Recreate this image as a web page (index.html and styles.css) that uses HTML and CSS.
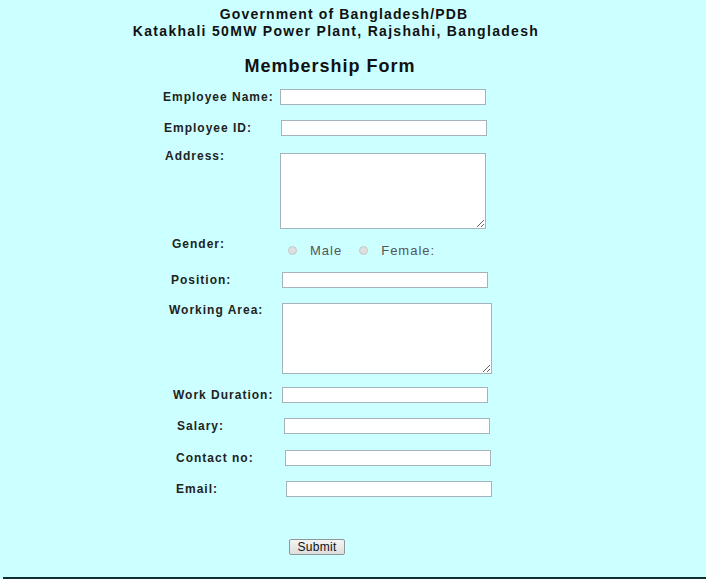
FILE: index.html
```html
<!DOCTYPE html>
<html>
<head>
<meta charset="utf-8">
<title>Membership Form</title>
<link rel="stylesheet" href="styles.css">
</head>
<body>
<div class="page">
  <header class="head">
    <div class="org org1">Government of Bangladesh/PDB</div>
    <div class="org">Katakhali 50MW Power Plant, Rajshahi, Bangladesh</div>
    <h1 class="title">Membership Form</h1>
  </header>
  <form class="form">
    <div class="row r-name"><label class="lbl">Employee Name:</label><input class="field" type="text"></div>
    <div class="row r-id"><label class="lbl">Employee ID:</label><input class="field" type="text"></div>
    <div class="row top r-addr"><label class="lbl">Address:</label><textarea class="area"></textarea></div>
    <div class="row top r-gender"><label class="lbl">Gender:</label>
      <div class="radios"><span class="radio"></span><span class="rtext">Male</span><span class="radio"></span><span class="rtext">Female:</span></div>
    </div>
    <div class="row r-pos"><label class="lbl">Position:</label><input class="field" type="text"></div>
    <div class="row top r-area"><label class="lbl">Working Area:</label><textarea class="area area2"></textarea></div>
    <div class="row r-dur"><label class="lbl">Work Duration:</label><input class="field" type="text"></div>
    <div class="row r-sal"><label class="lbl">Salary:</label><input class="field" type="text"></div>
    <div class="row r-con"><label class="lbl">Contact no:</label><input class="field" type="text"></div>
    <div class="row r-mail"><label class="lbl">Email:</label><input class="field" type="text"></div>
    <div class="actions"><button class="btn" type="button">Submit</button></div>
  </form>
</div>
</body>
</html>
```

FILE: styles.css
```css
html, body {
  margin: 0;
  padding: 0;
}
body {
  background: #ccffff;
  font-family: "Liberation Sans", Arial, sans-serif;
  color: #111;
}
.page {
  box-sizing: border-box;
  height: 579px;
  margin-left: 3px;
  border-bottom: 2px solid #0c3034;
  overflow: hidden;
}
.head {
  text-align: center;
  padding-top: 6px;
  padding-right: 37px;
}
.org {
  font-weight: bold;
  font-size: 14px;
  line-height: 17px;
  letter-spacing: 1.3px;
  white-space: nowrap;
}
.org1 {
  padding-left: 16px;
  letter-spacing: 1.15px;
}
.title {
  margin: 15px 0 0;
  font-size: 18px;
  line-height: 22px;
  letter-spacing: 1px;
  padding-right: 12px;
}
.form {
  margin-top: 12px;
}
.row {
  display: flex;
  align-items: center;
}
.row.top {
  align-items: flex-start;
}
.lbl {
  font-weight: bold;
  font-size: 12px;
  letter-spacing: 1px;
  color: #222;
  white-space: nowrap;
}
.field {
  box-sizing: border-box;
  width: 206px;
  height: 16px;
  margin: 0;
  padding: 0;
  border: 1px solid #a4b4b8;
  background: #fff;
}
.area {
  box-sizing: border-box;
  width: 206px;
  height: 76px;
  margin: 0;
  padding: 0;
  border: 1px solid #a4b4b8;
  background: #fff;
  resize: both;
}
.area2 {
  width: 210px;
  height: 71px;
}
.r-name { padding-left: 160px; margin-top: 0; }
.r-name .lbl { width: 117px; }
.r-id { padding-left: 161px; margin-top: 15px; }
.r-id .lbl { width: 117px; }
.r-addr { padding-left: 162px; margin-top: 17px; }
.r-addr .lbl { width: 115px; margin-top: -4px; }
.r-gender { padding-left: 169px; margin-top: 8px; }
.r-gender .lbl { width: 116px; }
.radios {
  display: flex;
  align-items: center;
  margin-top: 6px;
}
.radio {
  box-sizing: border-box;
  width: 9px;
  height: 9px;
  border-radius: 50%;
  border: 1px solid #c4c8c8;
  background: #dcdedf;
}
.rtext {
  font-size: 13px;
  color: #555;
  letter-spacing: 1px;
  margin-left: 13px;
  margin-right: 17px;
}
.r-pos { padding-left: 168px; margin-top: 14px; }
.r-pos .lbl { width: 111px; }
.r-area { padding-left: 166px; margin-top: 15px; }
.r-area .lbl { width: 113px; }
.r-dur { padding-left: 170px; margin-top: 13px; }
.r-dur .lbl { width: 109px; }
.r-sal { padding-left: 174px; margin-top: 15px; }
.r-sal .lbl { width: 107px; }
.r-con { padding-left: 173px; margin-top: 16px; }
.r-con .lbl { width: 109px; }
.r-mail { padding-left: 173px; margin-top: 15px; }
.r-mail .lbl { width: 110px; }
.actions {
  padding-left: 286px;
  margin-top: 40px;
}
.btn {
  font-family: "Liberation Sans", Arial, sans-serif;
  font-size: 12px;
  letter-spacing: 0.3px;
  color: #111;
  height: 16px;
  width: 56px;
  padding: 0;
  border: 1px solid #8f9696;
  border-radius: 2px;
  background: linear-gradient(#f4f4f4, #dedede);
}
```
